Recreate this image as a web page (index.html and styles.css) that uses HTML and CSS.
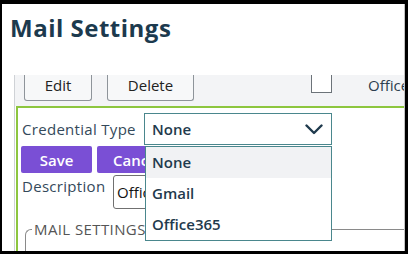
FILE: index.html
```html
<!DOCTYPE html>
<html>
<head>
<meta charset="utf-8">
<link rel="stylesheet" href="styles.css">
</head>
<body>
<div class="frame">
  <h1 class="title">Mail Settings</h1>
  <div class="panel">
    <div class="toolbar">
      <button class="tbtn tbtn-edit">Edit</button>
      <button class="tbtn tbtn-delete">Delete</button>
      <span class="check"></span>
      <span class="office">Office365</span>
    </div>
    <div class="editor">
      <div class="row row-cred">
        <label class="lbl">Credential Type</label>
        <div class="select">
          <span class="select-val">None</span>
          <svg class="chev" width="18" height="11" viewBox="0 0 18 11"><path d="M1.5 1.5 L9 9 L16.5 1.5" fill="none" stroke="#1f3a4d" stroke-width="2.4" stroke-linecap="round" stroke-linejoin="round"/></svg>
        </div>
      </div>
      <div class="row row-btns">
        <button class="pbtn pbtn-save">Save</button>
        <button class="pbtn pbtn-cancel">Cancel</button>
      </div>
      <div class="row row-desc">
        <label class="lbl lbl-desc">Description</label>
        <input class="desc-input" type="text" value="Office365 account">
      </div>
      <fieldset class="mailset">
        <legend class="legend">MAIL SETTINGS</legend>
        <div class="mailset-row">
          <span class="stub stub-a"></span>
          <span class="stub stub-b"></span>
        </div>
      </fieldset>
      <ul class="dropdown">
        <li class="opt opt-active">None</li>
        <li class="opt">Gmail</li>
        <li class="opt">Office365</li>
      </ul>
    </div>
  </div>
</div>
</body>
</html>
```
FILE: styles.css
```css
html, body {
  margin: 0;
  padding: 0;
  background: #000;
}
body {
  width: 408px;
  height: 254px;
  overflow: hidden;
  font-family: "Open Sans", "Liberation Sans", sans-serif;
}
.frame {
  margin: 4px 3px 3px 2px;
  height: 247px;
  background: #fff;
  overflow: hidden;
  position: relative;
  border-right: 1px solid #c4c4c4;
  box-sizing: border-box;
}
.title {
  margin: 0;
  padding: 8px 0 0 8px;
  font-size: 24px;
  line-height: 32px;
  font-weight: 700;
  letter-spacing: 0.5px;
  color: #1c3a4e;
  height: 71px;
  box-sizing: border-box;
}
.panel {
  margin-left: 12px;
  border-left: 1px solid #cfd2d6;
}
.toolbar {
  background: #f3f4f6;
  height: 31px;
  display: flex;
  align-items: flex-start;
  padding-left: 9px;
  white-space: nowrap;
  overflow: hidden;
}
.toolbar > * {
  flex-shrink: 0;
}
.tbtn {
  height: 26px;
  border: 1px solid #8e949a;
  border-top: none;
  border-radius: 0 0 3px 3px;
  background: #f7f8f9;
  font-family: inherit;
  font-size: 15px;
  color: #222;
  padding: 0 0 6px 0;
  line-height: 20px;
}
.tbtn-edit { width: 68px; }
.tbtn-delete { width: 87px; margin-left: 15px; }
.check {
  width: 21px;
  height: 18px;
  margin-left: 117px;
  border: 1px solid #6c7379;
  border-top: none;
  box-sizing: border-box;
  background: #fff;
}
.office {
  margin-left: 36px;
  font-size: 15px;
  line-height: 20px;
  color: #2d3e4e;
}
.editor {
  position: relative;
  margin-left: 1px;
  border-top: 2px solid #8dc63f;
  border-left: 2px solid #8dc63f;
  padding-top: 5px;
  height: 200px;
}
.row {
  display: flex;
}
.row-cred {
  align-items: center;
  height: 32px;
}
.lbl {
  font-size: 15px;
  letter-spacing: 0.3px;
  color: #34495a;
  margin-left: 4px;
}
.select {
  position: absolute;
  left: 126px;
  top: 5px;
  width: 188px;
  height: 32px;
  box-sizing: border-box;
  border: 1px solid #4a878d;
  display: flex;
  align-items: center;
  padding-left: 7px;
  background: #fff;
}
.select-val {
  font-size: 15px;
  font-weight: 600;
  color: #1f3a4d;
}
.chev {
  position: absolute;
  right: 8px;
  top: 10px;
}
.row-btns {
  margin-top: 1px;
  padding-left: 3px;
  gap: 5px;
}
.pbtn {
  height: 27px;
  border: none;
  border-radius: 2px;
  background: #7a4fd5;
  color: #fff;
  font-family: inherit;
  font-size: 15px;
  font-weight: 600;
  padding: 0;
}
.pbtn-save { width: 71px; }
.pbtn-cancel { width: 80px; }
.row-desc {
  margin-top: 2px;
  align-items: flex-start;
}
.lbl-desc {
  line-height: 20px;
  margin-top: 1px;
  width: 86px;
  white-space: nowrap;
}
.desc-input {
  margin-left: 5px;
  width: 160px;
  height: 34px;
  box-sizing: border-box;
  border: 1px solid #707070;
  border-radius: 3px;
  font-family: inherit;
  font-size: 15px;
  color: #111;
  padding: 0 3px;
}
.mailset {
  margin: 10px 0 0 7px;
  padding: 0 0 0 6px;
  border: 1px solid #8a8a8a;
  border-right: none;
  border-radius: 6px 0 0 0;
  height: 40px;
}
.legend {
  padding: 0 2px;
  font-size: 15px;
  color: #555;
  letter-spacing: 0.4px;
}
.mailset-row {
  display: flex;
  margin-top: 12px;
}
.stub {
  height: 3px;
  background: #4c5b69;
}
.stub-a { width: 21px; margin-left: -1px; }
.stub-b { width: 21px; margin-left: 185px; }
.dropdown {
  position: absolute;
  left: 127px;
  top: 38px;
  width: 187px;
  margin: 0;
  padding: 0;
  list-style: none;
  background: #fff;
  border: 1px solid #4a878d;
  box-sizing: border-box;
}
.opt {
  height: 31px;
  line-height: 31px;
  padding-left: 6px;
  font-size: 15px;
  font-weight: 600;
  color: #1f3a4d;
}
.opt-active {
  background: #f1f2f4;
}
```
